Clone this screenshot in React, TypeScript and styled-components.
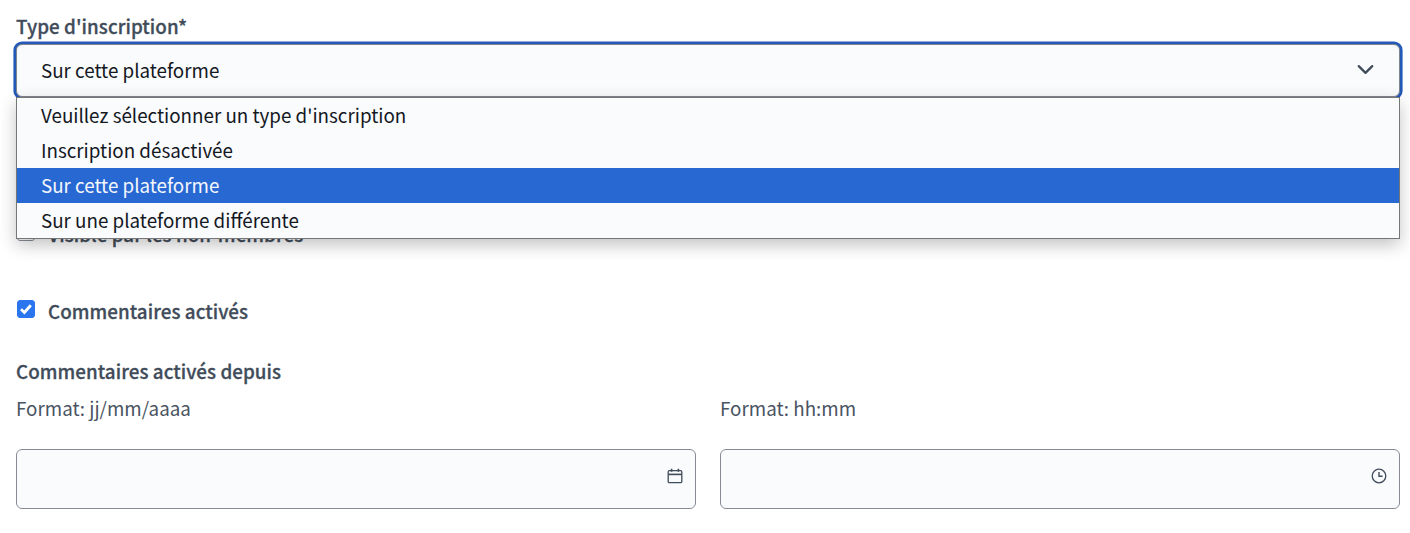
import React from 'react'
import styled, { createGlobalStyle } from 'styled-components'
import { ChevronDown } from 'lucide-react'

const GlobalStyle = createGlobalStyle`
  html, body {
    margin: 0;
    padding: 0;
    background: #fff;
  }

  body {
    font-family: "Noto Sans CJK SC", "Noto Sans", sans-serif;
    font-size: 18.8px;
  }
`

const Form = styled.form`
  display: flex;
  flex-direction: column;
  padding: 14px 10px 0 16px;
`

const Label = styled.label`
  display: block;
  height: 24px;
  margin-bottom: 6px;
  font-weight: 500;
  letter-spacing: 0.06px;
  line-height: 24px;
  color: #414c5a;
  -webkit-text-stroke: 0.3px #414c5a;
`

const SelectWrap = styled.div`
  position: relative;
`

const SelectBox = styled.div`
  display: flex;
  align-items: center;
  justify-content: space-between;
  box-sizing: border-box;
  height: 53px;
  padding: 0 20px 2px 24px;
  background: #fafbfd;
  border: 1px solid #7f8590;
  border-radius: 6px;
  box-shadow: 0 0 0 2.6px #2459b8;
  color: #14181f;
  line-height: 24px;
`

const OptionList = styled.ul`
  position: absolute;
  top: 53px;
  left: 0;
  right: 0;
  box-sizing: border-box;
  margin: 0;
  padding: 0;
  list-style: none;
  background: #fafbfd;
  border: 1px solid #767676;
  box-shadow: 0 6px 16px rgba(0, 0, 0, 0.24);
`

const Option = styled.li<{ $selected?: boolean }>`
  height: 35px;
  padding-left: 24px;
  background: ${p => (p.$selected ? '#2868d2' : 'transparent')};
  color: ${p => (p.$selected ? '#f4f7fc' : '#14181f')};
  line-height: 34px;
`

const CheckRow = styled.div<{ $top: number }>`
  display: flex;
  align-items: center;
  gap: 13px;
  height: 24px;
  margin-top: ${p => p.$top}px;
  padding-left: 1px;
`

const CheckBox = styled.span<{ $checked?: boolean }>`
  display: flex;
  align-items: center;
  justify-content: center;
  box-sizing: border-box;
  width: 18px;
  height: 18px;
  margin-top: -5px;
  background: ${p => (p.$checked ? '#2b75ee' : '#fff')};
  border: 1px solid ${p => (p.$checked ? '#2b75ee' : '#8a8f98')};
  border-radius: 3px;
`

const CheckText = styled.span`
  font-weight: 500;
  letter-spacing: 0.06px;
  line-height: 24px;
  color: #414c5a;
  -webkit-text-stroke: 0.3px #414c5a;
`

const SectionLabel = styled(Label)`
  margin: 36px 0 0;
`

const Columns = styled.div`
  display: grid;
  grid-template-columns: 680px 680px;
  column-gap: 24px;
  margin-top: 13px;
`

const Field = styled.div`
  display: flex;
  flex-direction: column;
`

const Hint = styled.div`
  height: 24px;
  margin-bottom: 29px;
  line-height: 24px;
  color: #4a5462;
`

const Input = styled.div`
  display: flex;
  align-items: center;
  justify-content: flex-end;
  box-sizing: border-box;
  height: 60px;
  padding: 0 12px 7px 0;
  background: #fafbfd;
  border: 1px solid #868b96;
  border-radius: 6px;
`

const CalendarIcon = () => (
  <svg width="16" height="16" viewBox="0 0 16 16" fill="none" stroke="#414c5a" strokeWidth="1.3">
    <rect x="1.2" y="2.7" width="13.6" height="12" rx="1.2" />
    <path d="M1.2 6.4h13.6" strokeWidth="1.6" />
    <path d="M4.6 0.8v3M11.4 0.8v3" strokeWidth="1.6" />
  </svg>
)

const ClockIcon = () => (
  <svg width="16" height="16" viewBox="0 0 16 16" fill="none" stroke="#414c5a" strokeWidth="1.3">
    <circle cx="8" cy="8" r="6.8" />
    <path d="M8 4v4.3h3.6" strokeWidth="1.4" />
  </svg>
)

const CheckMark = () => (
  <svg width="16" height="16" viewBox="0 0 16 16" fill="none" stroke="#fff" strokeWidth="2.8">
    <path d="M3 8.3l3.4 3.2 6.4-7.2" />
  </svg>
)

const options = [
  "Veuillez sélectionner un type d'inscription",
  'Inscription désactivée',
  'Sur cette plateforme',
  'Sur une plateforme différente'
]

const App: React.FC = () => (
  <>
    <GlobalStyle />
    <Form>
      <Label>Type d'inscription*</Label>
      <SelectWrap>
        <SelectBox>
          Sur cette plateforme
          <ChevronDown size={27} color="#414c5a" strokeWidth={2} />
        </SelectBox>
        <OptionList>
          {options.map(option => (
            <Option key={option} $selected={option === 'Sur cette plateforme'}>
              {option}
            </Option>
          ))}
        </OptionList>
      </SelectWrap>
      <CheckRow $top={125}>
        <CheckBox />
        <CheckText>Visible par les non-membres</CheckText>
      </CheckRow>
      <CheckRow $top={53}>
        <CheckBox $checked>
          <CheckMark />
        </CheckBox>
        <CheckText>Commentaires activés</CheckText>
      </CheckRow>
      <SectionLabel>Commentaires activés depuis</SectionLabel>
      <Columns>
        <Field>
          <Hint>Format: jj/mm/aaaa</Hint>
          <Input>
            <CalendarIcon />
          </Input>
        </Field>
        <Field>
          <Hint>Format: hh:mm</Hint>
          <Input>
            <ClockIcon />
          </Input>
        </Field>
      </Columns>
    </Form>
  </>
)

export default App
